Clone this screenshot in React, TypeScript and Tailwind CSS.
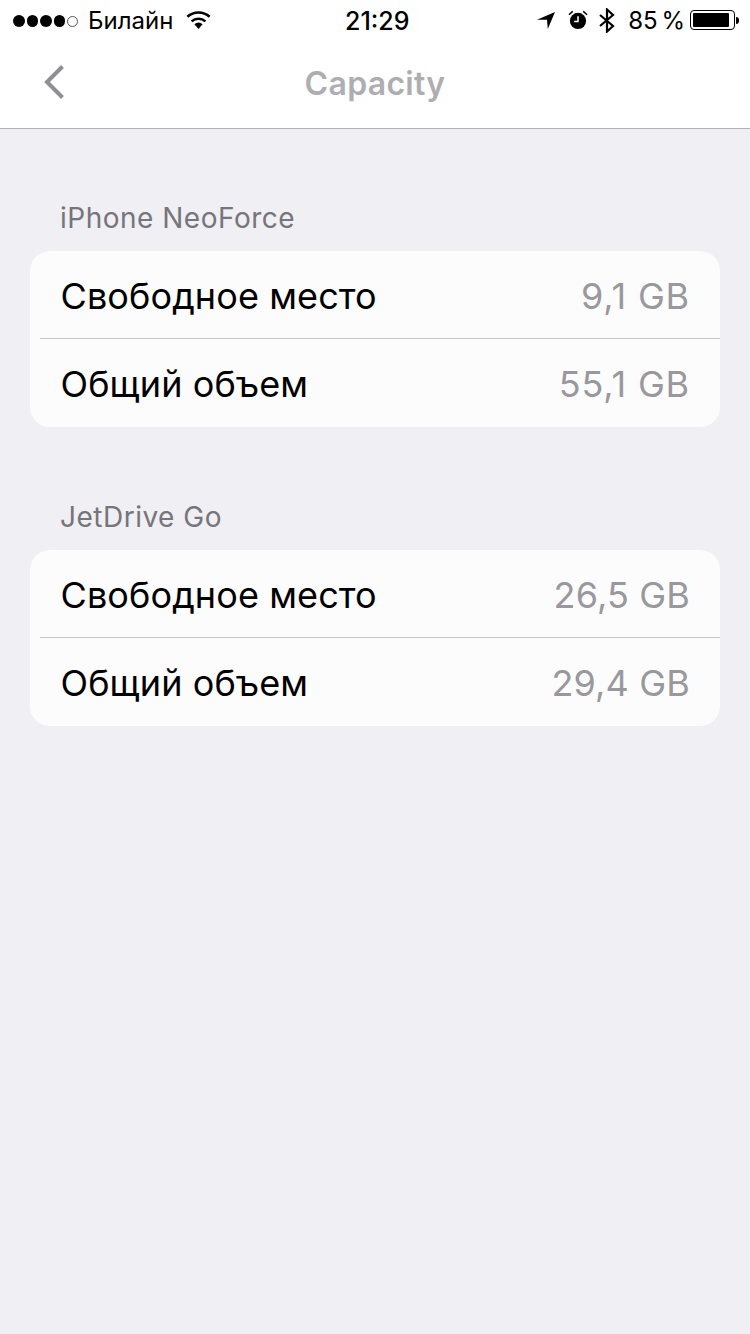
const font = "[font-family:Inter,'Liberation_Sans',sans-serif]";

const sections = [
  { name: "iPhone NeoForce", free: "9,1 GB", total: "55,1 GB" },
  { name: "JetDrive Go", free: "26,5 GB", total: "29,4 GB" },
];

function StatusBar() {
  return (
    <div className="flex h-10 items-center pl-[13px] pt-[2px] text-[24px] leading-none text-black">
      <div className="flex w-[332px] items-center">
        <div className="flex items-center gap-[2px]">
          <span className="h-[11.5px] w-[11.5px] rounded-full bg-black" />
          <span className="h-[11.5px] w-[11.5px] rounded-full bg-black" />
          <span className="h-[11.5px] w-[11.5px] rounded-full bg-black" />
          <span className="h-[11.5px] w-[11.5px] rounded-full bg-black" />
          <span className="h-[11px] w-[11px] rounded-full border border-[#555]" />
        </div>
        <span className="ml-[10px]">Билайн</span>
        <svg className="ml-[13px] -mt-[2px]" width="25" height="18" viewBox="0 0 25 18">
          <path d="M12.5 18 8.4 13.2a6.4 6.4 0 0 1 8.2 0Z" fill="#000" />
          <path d="M5.6 10.4a10.4 10.4 0 0 1 13.8 0" fill="none" stroke="#000" strokeWidth="2.6" />
          <path d="M1.4 5.8a16.6 16.6 0 0 1 22.2 0" fill="none" stroke="#000" strokeWidth="2.6" />
        </svg>
      </div>
      <span className="text-[25px] font-medium">21:29</span>
      <div className="ml-auto flex items-center pr-[11px] whitespace-nowrap">
        <svg className="-mt-[1px]" width="18" height="17" viewBox="0 0 18 17">
          <path d="M0 7.8 18 0 10.8 17 10 7.8Z" fill="#000" />
        </svg>
        <svg className="ml-[13px] -mt-[2px]" width="20" height="20" viewBox="0 0 21 21">
          <circle cx="10.5" cy="11.5" r="8.5" fill="#000" />
          <path d="M10.5 6.5v5.5H6.5" fill="none" stroke="#fff" strokeWidth="1.6" />
          <path d="M1 5 5 1.5M20 5 16 1.5" fill="none" stroke="#000" strokeWidth="1.6" />
        </svg>
        <svg className="ml-[11px] -mt-[2px]" width="16" height="25" viewBox="0 0 16 25">
          <path d="M1 7 14 18 8 23.5V1.5L14 7 1 18" fill="none" stroke="#000" strokeWidth="2.2" />
        </svg>
        <span className="ml-[13px] [word-spacing:-3px]">85 %</span>
        <div className="ml-[5px] -mt-[2px] flex h-[20px] w-[45px] items-center rounded-[4px] border border-black p-[2px]">
          <div className="h-full w-[36px] rounded-[1px] bg-black" />
        </div>
        <div className="ml-[1px] -mt-[2px] h-[7px] w-[3px] rounded-r-full bg-black" />
      </div>
    </div>
  );
}

function Row({ label, value, height }: { label: string; value: string; height: string }) {
  // Inter's "1" is narrower than the one in the picture, so those values get more tracking
  const tracking = value.includes(",1") ? "tracking-[0.85px]" : "tracking-[0.15px]";
  return (
    <div className={`flex items-center justify-between pl-[30.5px] pr-[30px] text-[36px] ${height}`}>
      <span className="pt-[2px] tracking-[0.1px] text-black">{label}</span>
      <span className={`pt-[2px] text-[#98989d] ${tracking}`}>{value}</span>
    </div>
  );
}

export default function App() {
  return (
    <div className={`flex min-h-[1334px] w-[750px] flex-col bg-[#efeff4] ${font}`}>
      <div className="h-[129px] border-b border-[#b2b2b6] bg-white">
        <StatusBar />
        <div className="relative flex h-[88px] items-center justify-center">
          <svg className="absolute left-[43px] top-[24px]" width="22" height="36" viewBox="0 0 22 36">
            <path d="M19.5 2.5 4 18l15.5 15.5" fill="none" stroke="#8e8e93" strokeWidth="4" />
          </svg>
          <span className="text-[32px] font-semibold tracking-[0.3px] text-[#aeaeb2]">Capacity</span>
        </div>
      </div>
      <div className="flex flex-col gap-[71px] pt-[70px]">
        {sections.map((s) => (
          <section key={s.name}>
            <div className="flex h-[52px] items-start pl-[60px] text-[28px] leading-[38px] tracking-[0.5px] text-[#75757a]">{s.name}</div>
            <div className="mx-[30px] rounded-[20px] bg-[#fcfcfd]">
              <Row label="Свободное место" value={s.free} height="h-[87px]" />
              <div className="ml-[10px] h-px bg-[#c8c8cc]" />
              <Row label="Общий объем" value={s.total} height="h-[88px]" />
            </div>
          </section>
        ))}
      </div>
    </div>
  );
}
